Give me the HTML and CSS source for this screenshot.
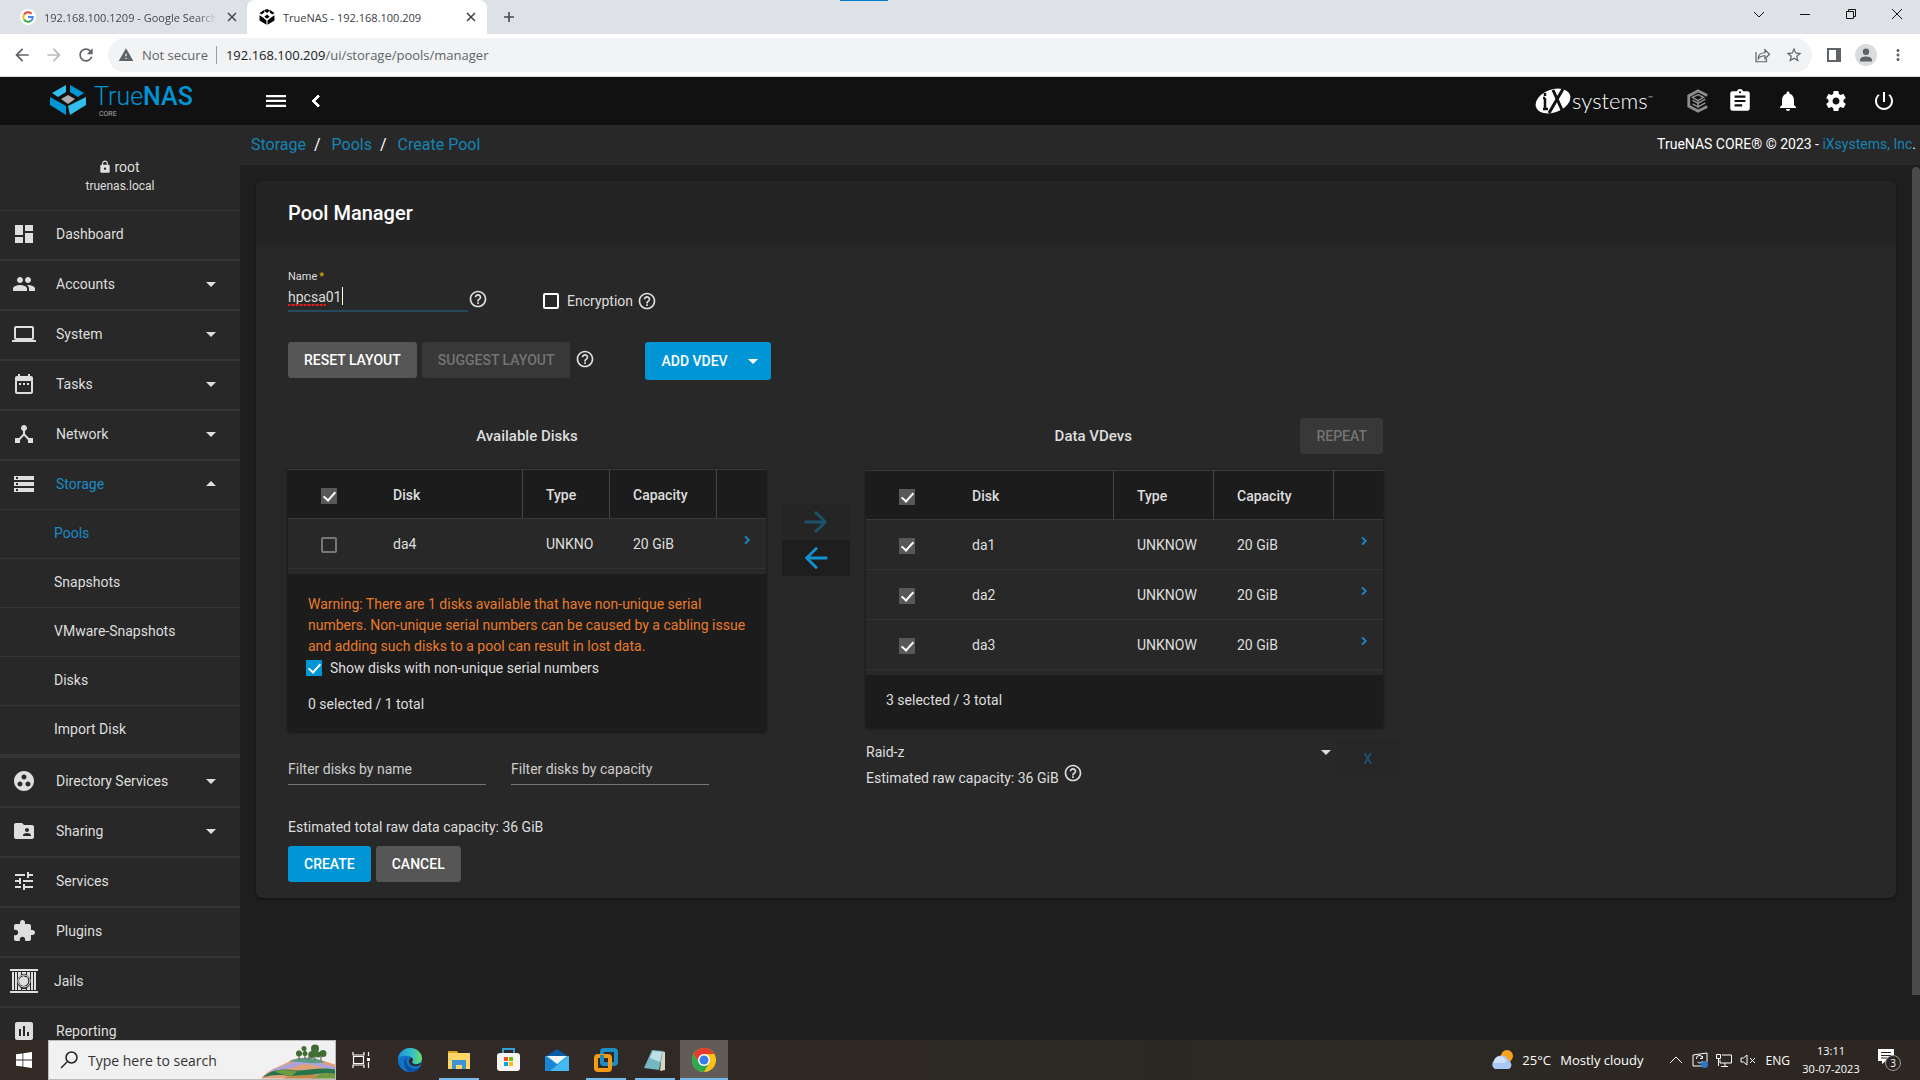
FILE: index.html
```html
<!DOCTYPE html>
<html lang="en">
<head>
<meta charset="utf-8">
<title>TrueNAS - 192.168.100.209</title>
<link rel="stylesheet" href="styles.css">
</head>
<body>
<svg class="sprite" aria-hidden="true">
  <symbol id="i-dashboard" viewBox="0 0 24 24"><path d="M3 13h8V3H3v10zm0 8h8v-6H3v6zm10 0h8V11h-8v10zm0-18v6h8V3h-8z"/></symbol>
  <symbol id="i-people" viewBox="0 0 24 24"><path d="M16 11c1.66 0 2.99-1.34 2.99-3S17.66 5 16 5c-1.66 0-3 1.34-3 3s1.34 3 3 3zm-8 0c1.66 0 2.99-1.34 2.99-3S9.66 5 8 5C6.34 5 5 6.34 5 8s1.34 3 3 3zm0 2c-2.33 0-7 1.17-7 3.5V19h14v-2.5c0-2.33-4.67-3.5-7-3.5zm8 0c-.29 0-.62.02-.97.05 1.16.84 1.97 1.97 1.97 3.45V19h6v-2.5c0-2.33-4.67-3.5-7-3.5z"/></symbol>
  <symbol id="i-laptop" viewBox="0 0 24 24"><path d="M20 18c1.1 0 1.99-.9 1.99-2L22 6c0-1.1-.9-2-2-2H4c-1.1 0-2 .9-2 2v10c0 1.1.9 2 2 2H0v2h24v-2h-4zM4 6h16v10H4V6z"/></symbol>
  <symbol id="i-date" viewBox="0 0 24 24"><path d="M9 11H7v2h2v-2zm4 0h-2v2h2v-2zm4 0h-2v2h2v-2zm2-7h-1V2h-2v2H8V2H6v2H5c-1.11 0-1.99.9-1.99 2L3 20c0 1.1.89 2 2 2h14c1.1 0 2-.9 2-2V6c0-1.1-.9-2-2-2zm0 16H5V9h14v11z"/></symbol>
  <symbol id="i-hub" viewBox="0 0 24 24"><path d="M17 16l-4-4V8.82C14.16 8.4 15 7.3 15 6c0-1.66-1.34-3-3-3S9 4.34 9 6c0 1.3.84 2.4 2 2.82V12l-4 4H3v5h5v-3.05l4-4.2 4 4.2V21h5v-5h-4z"/></symbol>
  <symbol id="i-storage" viewBox="0 0 24 24"><path d="M2 20h20v-4H2v4zm2-3h2v2H4v-2zM2 4v4h20V4H2zm4 3H4V5h2v2zm-4 7h20v-4H2v4zm2-3h2v2H4v-2z"/></symbol>
  <symbol id="i-group" viewBox="0 0 24 24"><path d="M12 2C6.48 2 2 6.48 2 12s4.48 10 10 10 10-4.48 10-10S17.52 2 12 2zM8 17.5c-1.38 0-2.5-1.12-2.5-2.5s1.12-2.5 2.5-2.5 2.5 1.12 2.5 2.5-1.12 2.5-2.5 2.5zM9.5 8c0-1.38 1.12-2.5 2.5-2.5s2.5 1.12 2.5 2.5-1.12 2.5-2.5 2.5S9.5 9.38 9.5 8zm6.5 9.5c-1.38 0-2.5-1.12-2.5-2.5s1.12-2.5 2.5-2.5 2.5 1.12 2.5 2.5-1.12 2.5-2.5 2.5z"/></symbol>
  <symbol id="i-share-folder" viewBox="0 0 24 24"><path d="M20 6h-8l-2-2H4c-1.1 0-1.99.9-1.99 2L2 18c0 1.1.9 2 2 2h16c1.1 0 2-.9 2-2V8c0-1.1-.9-2-2-2zm-5 3c1.1 0 2 .9 2 2s-.9 2-2 2-2-.9-2-2 .9-2 2-2zm4 8h-8v-1c0-1.33 2.67-2 4-2s4 .67 4 2v1z"/></symbol>
  <symbol id="i-tune" viewBox="0 0 24 24"><path d="M3 17v2h6v-2H3zM3 5v2h10V5H3zm10 16v-2h8v-2h-8v-2h-2v6h2zM7 9v2H3v2h4v2h2V9H7zm14 4v-2H11v2h10zm-6-4h2V7h4V5h-4V3h-2v6z"/></symbol>
  <symbol id="i-extension" viewBox="0 0 24 24"><path d="M20.5 11H19V7c0-1.1-.9-2-2-2h-4V3.5C13 2.12 11.88 1 10.5 1S8 2.12 8 3.5V5H4c-1.1 0-1.99.9-1.99 2v3.8H3.5c1.49 0 2.7 1.21 2.7 2.7s-1.21 2.7-2.7 2.7H2V20c0 1.1.9 2 2 2h3.8v-1.5c0-1.49 1.21-2.7 2.7-2.7 1.49 0 2.7 1.21 2.7 2.7V22H17c1.1 0 2-.9 2-2v-4h1.5c1.38 0 2.5-1.12 2.5-2.5S21.88 11 20.5 11z"/></symbol>
  <symbol id="i-jail" viewBox="0 0 28 24"><path d="M0 0h28v2H0zM0 22h28v2H0zM2 3h2v18H2zM5 3h2v18H5zM21 3h2v18h-2zM24 3h2v18h-2zM8 3h3v3l-3 3zM17 3h3v6l-3-3zM8 16l3 3v2H8zM20 16v5h-3v-2zM12 3h4v2h-4zM12 20h4v1h-4z"/><circle cx="14" cy="12" r="6" fill="none" stroke="currentColor" stroke-width="1"/><path d="M14 7c1 2 2 0 4 2-1 1 1 2 0 5-1 2-3 3-5 3-3-1-4-3-4-5 0-3 2-4 5-5z"/></symbol>
  <symbol id="i-chart" viewBox="0 0 24 24"><path d="M19 3H5c-1.1 0-2 .9-2 2v14c0 1.1.9 2 2 2h14c1.1 0 2-.9 2-2V5c0-1.1-.9-2-2-2zM9 17H7v-7h2v7zm4 0h-2V7h2v10zm4 0h-2v-4h2v4z"/></symbol>
  <symbol id="i-help" viewBox="0 0 24 24"><path d="M11 18h2v-2h-2v2zm1-16C6.48 2 2 6.48 2 12s4.48 10 10 10 10-4.48 10-10S17.52 2 12 2zm0 18c-4.41 0-8-3.59-8-8s3.59-8 8-8 8 3.59 8 8-3.59 8-8 8zm0-14c-2.21 0-4 1.79-4 4h2c0-1.1.9-2 2-2s2 .9 2 2c0 2-3 1.75-3 5h2c0-2.25 3-2.5 3-5 0-2.21-1.79-4-4-4z"/></symbol>
  <symbol id="i-down" viewBox="0 0 24 24"><path d="M7 10l5 5 5-5z"/></symbol>
  <symbol id="i-up" viewBox="0 0 24 24"><path d="M7 14l5-5 5 5z"/></symbol>
  <symbol id="i-menu" viewBox="0 0 24 24"><path d="M2 18h20v-2.3H2V18zm0-4.900h20v-2.300H2v2.300zM2 6v2.300h20V6H2z"/></symbol>
  <symbol id="i-left" viewBox="0 0 24 24"><path d="M15.410 7.410L14 6l-6 6 6 6 1.410-1.410L10.830 12z" stroke="currentColor"/></symbol>
  <symbol id="i-right" viewBox="0 0 24 24"><path d="M10 6L8.590 7.410 13.170 12l-4.580 4.590L10 18l6-6z" stroke="currentColor"/></symbol>
  <symbol id="i-assignment" viewBox="0 0 24 24"><path d="M19 3h-4.180C14.400 1.840 13.300 1 12 1c-1.300 0-2.400.840-2.820 2H5c-1.100 0-2 .900-2 2v14c0 1.100.900 2 2 2h14c1.100 0 2-.900 2-2V5c0-1.100-.900-2-2-2zm-7 0c.550 0 1 .450 1 1s-.450 1-1 1-1-.450-1-1 .450-1 1-1zm2 14H7v-2h7v2zm3-4H7v-2h10v2zm0-4H7V7h10v2z"/></symbol>
  <symbol id="i-bell" viewBox="0 0 24 24"><path d="M12 22c1.100 0 2-.900 2-2h-4c0 1.100.890 2 2 2zm6-6v-5c0-3.070-1.640-5.640-4.500-6.320V4c0-.830-.670-1.500-1.500-1.500s-1.500.670-1.500 1.500v.680C7.630 5.360 6 7.920 6 11v5l-2 2v1h16v-1l-2-2z"/></symbol>
  <symbol id="i-gear" viewBox="0 0 24 24"><path d="M19.430 12.980c.040-.320.070-.640.070-.980s-.030-.660-.070-.980l2.110-1.650c.190-.150.240-.420.120-.640l-2-3.460c-.120-.220-.390-.300-.610-.220l-2.490 1c-.520-.400-1.080-.730-1.690-.980l-.380-2.650C14.460 2.180 14.250 2 14 2h-4c-.250 0-.460.180-.490.420l-.380 2.650c-.610.250-1.170.590-1.690.980l-2.490-1c-.230-.090-.490 0-.610.220l-2 3.460c-.130.220-.070.490.120.640l2.110 1.650c-.040.320-.070.650-.070.980s.030.660.070.980l-2.110 1.650c-.190.150-.240.420-.120.640l2 3.460c.120.220.390.300.610.220l2.490-1c.520.400 1.080.730 1.690.980l.380 2.650c.030.240.240.420.490.420h4c.250 0 .460-.180.490-.420l.380-2.650c.610-.250 1.170-.590 1.690-.980l2.490 1c.230.090.490 0 .610-.220l2-3.460c.120-.220.070-.490-.120-.640l-2.110-1.650zM12 15.500c-1.930 0-3.500-1.570-3.500-3.500s1.570-3.500 3.500-3.500 3.500 1.570 3.500 3.500-1.570 3.500-3.500 3.500z"/></symbol>
  <symbol id="i-power" viewBox="0 0 24 24"><path d="M13 3h-2v10h2V3zm4.830 2.170l-1.420 1.420C17.990 7.860 19 9.810 19 12c0 3.870-3.130 7-7 7s-7-3.130-7-7c0-2.190 1.010-4.140 2.580-5.420L6.170 5.170C4.230 6.820 3 9.260 3 12c0 4.970 4.030 9 9 9s9-4.030 9-9c0-2.740-1.230-5.180-3.170-6.830z"/></symbol>
  <symbol id="i-lock" viewBox="0 0 24 24"><path d="M18 8h-1V6c0-2.760-2.240-5-5-5S7 3.240 7 6v2H6c-1.100 0-2 .900-2 2v10c0 1.100.900 2 2 2h12c1.100 0 2-.900 2-2V10c0-1.100-.900-2-2-2zm-6 9c-1.100 0-2-.900-2-2s.900-2 2-2 2 .900 2 2-.900 2-2 2zm3.100-9H8.900V6c0-1.710 1.390-3.100 3.100-3.100 1.710 0 3.100 1.390 3.100 3.100v2z"/></symbol>
  <symbol id="i-back" viewBox="0 0 24 24"><path d="M20 11H7.830l5.590-5.590L12 4l-8 8 8 8 1.410-1.410L7.830 13H20v-2z"/></symbol>
  <symbol id="i-forward" viewBox="0 0 24 24"><path d="M12 4l-1.410 1.410L16.170 11H4v2h12.170l-5.580 5.590L12 20l8-8z"/></symbol>
  <symbol id="i-reload" viewBox="0 0 24 24"><path d="M17.650 6.350C16.200 4.900 14.210 4 12 4c-4.420 0-7.990 3.580-7.990 8s3.570 8 7.990 8c3.730 0 6.840-2.550 7.730-6h-2.080c-.820 2.330-3.040 4-5.650 4-3.310 0-6-2.690-6-6s2.690-6 6-6c1.660 0 3.140.690 4.220 1.780L13 11h7V4l-2.350 2.350z"/></symbol>
  <symbol id="i-warning" viewBox="0 0 24 24"><path d="M1 21h22L12 2 1 21zm12-3h-2v-2h2v2zm0-4h-2v-4h2v4z"/></symbol>
  <symbol id="i-star" viewBox="0 0 24 24"><path d="M22 9.240l-7.190-.620L12 2 9.190 8.630 2 9.240l5.460 4.730L5.820 21 12 17.270 18.180 21l-1.630-7.030L22 9.240zM12 15.400l-3.760 2.270 1-4.280-3.320-2.880 4.380-.380L12 6.100l1.710 4.040 4.380.380-3.320 2.880 1 4.280L12 15.400z"/></symbol>
  <symbol id="i-share" viewBox="0 0 24 24"><path d="M4 8v13h14v-4M7 17c0-5 3-8 9-8V5l6 6-6 6v-4c-4 0-7 1-9 4z" fill="none" stroke="currentColor" stroke-width="1.600"/></symbol>
  <symbol id="i-panel" viewBox="0 0 16 16"><path fill-rule="evenodd" d="M1 1h14v14H1zM3 3v10h7V3z"/></symbol>
  <symbol id="i-person" viewBox="0 0 24 24"><circle cx="12" cy="12" r="12" fill="#dadce0"/><path d="M12 12a3.500 3.500 0 1 0 0-7 3.500 3.500 0 0 0 0 7zm0 1.500c-3 0-6.500 1.300-6.500 3.700V19h13v-1.800c0-2.400-3.500-3.700-6.500-3.700z"/></symbol>
  <symbol id="i-more" viewBox="0 0 24 24"><path d="M12 8c1.100 0 2-.900 2-2s-.900-2-2-2-2 .900-2 2 .900 2 2 2zm0 2c-1.100 0-2 .900-2 2s.900 2 2 2 2-.900 2-2-.900-2-2-2zm0 6c-1.100 0-2 .900-2 2s.900 2 2 2 2-.900 2-2-.900-2-2-2z"/></symbol>
  <symbol id="i-close" viewBox="0 0 12 12"><path d="M2 2l8 8M10 2l-8 8" fill="none" stroke="currentColor" stroke-width="1.500"/></symbol>
  <symbol id="i-plus" viewBox="0 0 12 12"><path d="M6 1v10M1 6h10" fill="none" stroke="currentColor" stroke-width="1.600"/></symbol>
  <symbol id="i-nas" viewBox="0 0 30 30"><path d="M1 7l9-6v5l-5 4zM29 7l-9-6v5l5 4zM13 0h4l3 3-5 4-5-4zM1 11l7 5 6 5v8L1 21zM29 11l-7 5-6 5v8l13-8zM15 10l5 4-5 4-5-4z" transform="translate(0 .5)"/></symbol>
</svg>

<header class="browser">
  <div class="tabstrip">
    <div class="tab">
      <svg class="fav" viewBox="0 0 16 16"><circle cx="8" cy="8" r="8" fill="#fff"/><g fill="none" stroke-width="2"><path d="M11.600 4.800A4.800 4.800 0 0 0 4 5.600" stroke="#ea4335"/><path d="M4 5.500a5 5 0 0 0 0 5" stroke="#fbbc05"/><path d="M4 10.400a4.800 4.800 0 0 0 7 1.300" stroke="#34a853"/><path d="M8 8h4.800c0 1.500-.600 2.800-1.800 3.700" stroke="#4285f4"/></g></svg>
      <span class="tab-title fade">192.168.100.1209 - Google Search</span>
      <button class="plain tab-close" aria-label="Close tab"><svg class="s12"><use href="#i-close"/></svg></button>
    </div>
    <div class="tab active">
      <svg class="fav dark"><use href="#i-nas"/></svg>
      <span class="tab-title">TrueNAS - 192.168.100.209</span>
      <button class="plain tab-close" aria-label="Close tab"><svg class="s12"><use href="#i-close"/></svg></button>
    </div>
    <button class="plain new-tab" aria-label="New tab"><svg class="s12"><use href="#i-plus"/></svg></button>
    <span class="loading-mark"></span>
    <div class="window-buttons">
      <button class="plain" aria-label="Search tabs"><svg viewBox="0 0 10 10"><path d="M0 3l5 5 5-5"/></svg></button>
      <button class="plain" aria-label="Minimise"><svg viewBox="0 0 10 10"><path d="M0 5.500h10"/></svg></button>
      <button class="plain" aria-label="Restore"><svg viewBox="0 0 10 10"><path d="M.5 2.500h7v7h-7zM2.500 2.500v-2h7v7h-2"/></svg></button>
      <button class="plain" aria-label="Close"><svg viewBox="0 0 10 10"><path d="M0 0l10 10M10 0L0 10"/></svg></button>
    </div>
  </div>
  <div class="toolbar">
    <button class="plain nav-btn" aria-label="Back"><svg class="s20"><use href="#i-back"/></svg></button>
    <button class="plain nav-btn faint" aria-label="Forward"><svg class="s20"><use href="#i-forward"/></svg></button>
    <button class="plain nav-btn" aria-label="Reload"><svg class="s20"><use href="#i-reload"/></svg></button>
    <div class="omnibox">
      <svg class="s16"><use href="#i-warning"/></svg>
      <span class="secure">Not secure</span>
      <span class="url"><b>192.168.100.209</b>/ui/storage/pools/manager</span>
      <button class="plain nav-btn" aria-label="Share"><svg class="s18"><use href="#i-share"/></svg></button>
      <button class="plain nav-btn" aria-label="Bookmark"><svg class="s18"><use href="#i-star"/></svg></button>
    </div>
    <button class="plain nav-btn" aria-label="Side panel"><svg class="s16"><use href="#i-panel"/></svg></button>
    <button class="plain nav-btn" aria-label="Profile"><svg class="s22"><use href="#i-person"/></svg></button>
    <button class="plain nav-btn" aria-label="Menu"><svg class="s18"><use href="#i-more"/></svg></button>
  </div>
</header>

<div class="app">
  <header class="topbar">
    <a class="brand" href="#">
      <svg class="brand-mark" viewBox="0 0 36 30"><path fill="#31beec" d="M2 8L16 0v7L8 12zM18 21l18-9v8L20 30z"/><path fill="#0095d5" d="M34 8L20 0v7l8 5zM0 12l16 9v9L0 20z"/><path fill="#aeadae" d="M18 10l7 4-7 5-7-5z"/></svg>
      <span class="brand-text"><span class="brand-name">True<b>NAS</b></span><span class="brand-sub">CORE</span></span>
    </a>
    <button class="plain top-btn menu" aria-label="Toggle menu"><svg class="s24"><use href="#i-menu"/></svg></button>
    <button class="plain top-btn" aria-label="Collapse menu"><svg class="s24"><use href="#i-left"/></svg></button>
    <a class="ix" href="#">
      <svg class="ix-mark" viewBox="0 0 36 28"><ellipse cx="18" cy="14" rx="18" ry="11.500" transform="rotate(-20 18 14)" fill="#fff"/><path d="M18 3l9 20M28 2L14 26" stroke="#111" stroke-width="3"/><path d="M10 11v11M10 6v3M8 11h2M8 22h5" stroke="#111" stroke-width="2.500"/></svg>
      <span>systems</span><sup>™</sup>
    </a>
    <div class="top-icons">
      <button class="plain top-btn command" aria-label="TrueCommand"><svg class="s24" viewBox="0 0 24 26"><path d="M22 7L12 2 2 7.500v11L12 24l10-5" fill="none" stroke="currentColor" stroke-width="3"/><path d="M12 6l6 3-6 3.500L6 9zM6 12l6 3.500 8-4.500M6 16l6 3.500 8-4.500M12 12v9" fill="none" stroke="currentColor" stroke-width="1.600"/></svg></button>
      <button class="plain top-btn" aria-label="Tasks"><svg class="s26"><use href="#i-assignment"/></svg></button>
      <button class="plain top-btn" aria-label="Alerts"><svg class="s24"><use href="#i-bell"/></svg></button>
      <button class="plain top-btn" aria-label="Settings"><svg class="s24"><use href="#i-gear"/></svg></button>
      <button class="plain top-btn" aria-label="Power"><svg class="s24"><use href="#i-power"/></svg></button>
    </div>
  </header>

  <aside class="sidebar">
    <div class="user"><span class="user-name"><svg class="s14"><use href="#i-lock"/></svg>root</span><span class="host">truenas.local</span></div>
    <nav>
      <a class="item" href="#"><svg class="ico"><use href="#i-dashboard"/></svg>Dashboard</a>
      <a class="item" href="#"><svg class="ico"><use href="#i-people"/></svg>Accounts<svg class="caret"><use href="#i-down"/></svg></a>
      <a class="item" href="#"><svg class="ico"><use href="#i-laptop"/></svg>System<svg class="caret"><use href="#i-down"/></svg></a>
      <a class="item" href="#"><svg class="ico"><use href="#i-date"/></svg>Tasks<svg class="caret"><use href="#i-down"/></svg></a>
      <a class="item" href="#"><svg class="ico"><use href="#i-hub"/></svg>Network<svg class="caret"><use href="#i-down"/></svg></a>
      <a class="item open" href="#"><svg class="ico"><use href="#i-storage"/></svg><span class="accent">Storage</span><svg class="caret"><use href="#i-up"/></svg></a>
      <div class="submenu">
        <a class="sub accent" href="#">Pools</a>
        <a class="sub" href="#">Snapshots</a>
        <a class="sub" href="#">VMware-Snapshots</a>
        <a class="sub" href="#">Disks</a>
        <a class="sub" href="#">Import Disk</a>
      </div>
      <a class="item" href="#"><svg class="ico"><use href="#i-group"/></svg>Directory Services<svg class="caret"><use href="#i-down"/></svg></a>
      <a class="item" href="#"><svg class="ico"><use href="#i-share-folder"/></svg>Sharing<svg class="caret"><use href="#i-down"/></svg></a>
      <a class="item" href="#"><svg class="ico"><use href="#i-tune"/></svg>Services</a>
      <a class="item" href="#"><svg class="ico"><use href="#i-extension"/></svg>Plugins</a>
      <a class="item jails" href="#"><svg class="ico"><use href="#i-jail"/></svg>Jails</a>
      <a class="item" href="#"><svg class="ico"><use href="#i-chart"/></svg>Reporting</a>
    </nav>
  </aside>

  <main class="content">
    <div class="crumbs">
      <nav><a href="#">Storage</a><i>/</i><a href="#">Pools</a><i>/</i><a href="#">Create Pool</a></nav>
      <p>TrueNAS CORE® © 2023 - <a href="#">iXsystems, Inc</a>.</p>
    </div>
    <div class="scroller">
      <form class="card">
        <h1>Pool Manager</h1>
        <div class="card-body">
          <div class="row fields">
            <div class="name-field">
              <label for="pool-name">Name<em>*</em></label>
              <div class="name-input"><span class="misspelt"></span><input id="pool-name" type="text" value="hpcsa01" spellcheck="false"><span class="cursor"></span></div>
            </div>
            <svg class="help"><use href="#i-help"/></svg>
            <div class="encrypt"><input type="checkbox" class="box light" id="enc"><label for="enc">Encryption</label><svg class="help"><use href="#i-help"/></svg></div>
          </div>
          <div class="row actions">
            <button type="button" class="btn">RESET LAYOUT</button>
            <button type="button" class="btn" disabled>SUGGEST LAYOUT</button>
            <svg class="help"><use href="#i-help"/></svg>
            <button type="button" class="btn primary vdev">ADD VDEV<svg class="s24"><use href="#i-down"/></svg></button>
          </div>

          <div class="columns">
            <section>
              <h2>Available Disks</h2>
              <div class="panel">
                <table class="available">
                  <colgroup><col class="c-check"><col class="c-disk"><col class="c-type"><col class="c-cap"><col></colgroup>
                  <thead><tr><th><input type="checkbox" class="box" checked aria-label="Select all"></th><th>Disk</th><th>Type</th><th>Capacity</th><th></th></tr></thead>
                  <tbody><tr><td><input type="checkbox" class="box" aria-label="da4"></td><td>da4</td><td>UNKNO</td><td>20 GiB</td><td><svg class="go"><use href="#i-right"/></svg></td></tr></tbody>
                </table>
                <div class="panel-foot warned">
                  <p class="warn">Warning: There are 1 disks available that have non-unique serial numbers. Non-unique serial numbers can be caused by a cabling issue and adding such disks to a pool can result in lost data.</p>
                  <div class="show"><input type="checkbox" class="box blue" id="nonuniq" checked><label for="nonuniq">Show disks with non-unique serial numbers</label></div>
                  <p class="count">0 selected / 1 total</p>
                </div>
              </div>
              <div class="filters">
                <input type="text" aria-label="Filter disks by name" placeholder="Filter disks by name">
                <input type="text" aria-label="Filter disks by capacity" placeholder="Filter disks by capacity">
              </div>
            </section>
            <div class="movers">
              <button type="button" class="move" disabled aria-label="Add disks"><svg><use href="#i-forward"/></svg></button>
              <button type="button" class="move" aria-label="Remove disks"><svg><use href="#i-back"/></svg></button>
            </div>
            <section>
              <div class="vdev-head"><h2>Data VDevs</h2><button type="button" class="btn" disabled>REPEAT</button></div>
              <div class="panel">
                <table class="data">
                  <colgroup><col class="c-check"><col class="c-disk"><col class="c-type"><col class="c-cap"><col></colgroup>
                  <thead><tr><th><input type="checkbox" class="box" checked aria-label="Select all"></th><th>Disk</th><th>Type</th><th>Capacity</th><th></th></tr></thead>
                  <tbody>
                    <tr><td><input type="checkbox" class="box" checked aria-label="da1"></td><td>da1</td><td>UNKNOW</td><td>20 GiB</td><td><svg class="go"><use href="#i-right"/></svg></td></tr>
                    <tr><td><input type="checkbox" class="box" checked aria-label="da2"></td><td>da2</td><td>UNKNOW</td><td>20 GiB</td><td><svg class="go"><use href="#i-right"/></svg></td></tr>
                    <tr><td><input type="checkbox" class="box" checked aria-label="da3"></td><td>da3</td><td>UNKNOW</td><td>20 GiB</td><td><svg class="go"><use href="#i-right"/></svg></td></tr>
                  </tbody>
                </table>
                <div class="panel-foot"><p>3 selected / 3 total</p></div>
              </div>
              <div class="raid">
                <div class="raid-info">
                  <div class="select"><select aria-label="VDev type"><option>Raid-z</option></select><svg class="s24"><use href="#i-down"/></svg></div>
                  <p>Estimated raw capacity: 36 GiB <svg class="help"><use href="#i-help"/></svg></p>
                </div>
                <button type="button" class="remove" disabled>X</button>
              </div>
            </section>
          </div>

          <p class="total">Estimated total raw data capacity: 36 GiB</p>
          <div class="row">
            <button type="submit" class="btn primary">CREATE</button>
            <button type="button" class="btn">CANCEL</button>
          </div>
        </div>
      </form>
      <div class="scrollbar"></div>
    </div>
  </main>
</div>

<footer class="taskbar">
  <button class="plain start" aria-label="Start"><svg viewBox="0 0 16 16"><path fill="#fff" d="M0 2.300l6.500-.900v6.200H0zM7.300 1.300L16 0v7.600H7.300zM0 8.400h6.500v6.200L0 13.700zM7.300 8.400H16V16l-8.700-1.200z"/></svg></button>
  <div class="search">
    <svg class="s18" viewBox="0 0 18 18"><path d="M1 17l6-6" stroke="#222" stroke-width="1.500"/><circle cx="11.500" cy="6.500" r="5.500" fill="none" stroke="#222" stroke-width="1.500"/></svg>
    <input type="text" aria-label="Search" placeholder="Type here to search">
    <svg class="hills" viewBox="0 0 74 36">
      <path fill="#e0a07c" d="M0 36C8 26 20 24 30 18c16-6 32 0 44 4v14z"/>
      <path fill="#a9a4e0" d="M6 32c8-8 18-8 28-13 12-4 28 2 40 6v3C60 26 48 18 34 24 24 28 14 26 6 32z"/>
      <path fill="#5f9a86" d="M28 19c10-5 26-5 36 1-12 2-26-1-36-1z"/>
      <path fill="#24744c" d="M2 35c8-8 20-9 32-7 14 0 26-4 40-1v5c-14-4-28 4-44 2-10-2-18-2-28 1z"/>
      <path fill="#6f9c43" d="M14 29c8-3 14-1 22 0l-6 5c-6-2-10-2-16-5zM50 36c6-5 14-6 24-5v5z"/>
      <path fill="#c08a4a" d="M22 36c8-4 18-3 30-4l6 4z"/>
      <path d="M38 17V8M44 16V5M54 17V7M60 18v-8M48 17v-6" stroke="#5b4630"/>
      <g fill="#3f6d33"><circle cx="38" cy="11" r="3"/><circle cx="43" cy="6" r="2.500"/><circle cx="44" cy="11" r="2.500"/><circle cx="54" cy="6" r="4"/><circle cx="51" cy="12" r="3.500"/><circle cx="57" cy="12" r="3"/><circle cx="62" cy="11" r="3.500"/></g>
    </svg>
  </div>
  <div class="apps">
    <button class="plain appicon" aria-label="Task view"><svg viewBox="0 0 24 24"><path d="M4 4v3h11V4M4 20v-3h11v3M4.500 8.500h10v7h-10zM19.500 4v4M19.500 14v6" fill="none" stroke="#fff" stroke-width="1.200"/><path fill="#fff" d="M18 10h3v3h-3z"/></svg></button>
    <button class="plain appicon" aria-label="Edge"><svg viewBox="0 0 24 24"><defs><linearGradient id="ga" x1="0" x2="1"><stop stop-color="#1b8fdc"/><stop offset=".6" stop-color="#35c1c8"/><stop offset="1" stop-color="#6cdc5a"/></linearGradient></defs><circle cx="12" cy="12" r="12" fill="#1174c9"/><path fill="url(#ga)" d="M0 11C1 4 6 0 12 0c7 0 12 5 12 10 0 4-3 6-6 6-2 0-4-1-4-2 2-2 1-6-4-6-5-1-9 1-10 3z"/><path fill="#0c4f9c" d="M9 9c-2 4 0 11 7 12 3 0 5-1 7-3-3 6-9 7-13 5-5-3-5-11-1-14z"/><path fill="#322925" d="M14 10c2 2 0 4 0 4 0 2 3 3 6 2l3-1c0 1-1 2-1 2-6 3-12 0-11-5 1-2 2-2 3-2z"/></svg></button>
    <button class="plain appicon running" aria-label="File Explorer"><svg viewBox="0 0 24 24"><path fill="#e0a020" d="M1 3h9l2 3H1z"/><path fill="#ffd768" d="M1 5h22v16H1z"/><path fill="#3b94d8" d="M5 12h14v9h-4v-4H9v4H5z"/></svg></button>
    <button class="plain appicon" aria-label="Store"><svg viewBox="0 0 24 24"><path d="M7 6V1h11v5" fill="none" stroke="#35a0d8" stroke-width="2"/><rect x="1" y="5" width="23" height="18" rx="3" fill="#f5f5f5"/><path fill="#f25022" d="M8 9h4v4H8z"/><path fill="#7fba00" d="M13 9h4v4h-4z"/><path fill="#00a4ef" d="M8 14h4v4H8z"/><path fill="#ffb900" d="M13 14h4v4h-4z"/></svg></button>
    <button class="plain appicon" aria-label="Mail"><svg viewBox="0 0 24 24"><path fill="#0a5aaa" d="M0 9L12 1l12 8z"/><path fill="#29a5ea" d="M0 8h24v15H0z"/><path fill="#1c86d4" d="M0 8l13 8-7 7H0z"/><path fill="#45b9f2" d="M24 8v15H5z"/><path fill="#f2f6fa" d="M2 8h20L12 16z"/></svg></button>
    <button class="plain appicon running" aria-label="VMware"><svg viewBox="0 0 24 24"><rect x="8" y="2" width="14" height="14" rx="2" fill="none" stroke="#1c8ec4" stroke-width="4"/><rect x="2" y="8" width="14" height="14" rx="2" fill="none" stroke="#f59a13" stroke-width="4"/><path d="M8 12V7" stroke="#1c8ec4" stroke-width="4"/></svg></button>
    <button class="plain appicon running" aria-label="Notepad"><svg viewBox="0 0 24 24"><path fill="#d9d4c6" d="M19 3l3 1v18l-5 1z"/><path fill="#76b7c4" d="M9 2l11 1-4 19-15-2z"/><path fill="#bfe0e6" d="M10 3l9 1-2 10-10-4z"/></svg></button>
    <button class="plain appicon current" aria-label="Chrome"><svg viewBox="0 0 24 24"><circle cx="12" cy="12" r="12" fill="#fbc116"/><path fill="#e33b2e" d="M1.600 6a12 12 0 0 1 20.800 0H12l-5 9z"/><path fill="#2da94f" d="M1.600 6A12 12 0 0 0 12 24l5-9-5 2-5-2z"/><circle cx="12" cy="12" r="6" fill="#fff"/><circle cx="12" cy="12" r="4.500" fill="#3b7de8"/></svg></button>
  </div>
  <div class="tray">
    <svg class="weather" viewBox="0 0 24 20"><circle cx="17" cy="6" r="6" fill="#f7a21b"/><path fill="#a9c8f5" d="M5 19a5 5 0 0 1 0-9 7 7 0 0 1 13 0 5 5 0 0 1 1 9z"/><path fill="#cfe0fb" d="M4 13a6 6 0 0 1 11-4c2 1 1 4-2 4z"/></svg>
    <span class="temp">25°C</span><span class="sky">Mostly cloudy</span>
    <svg class="tray-i chev" viewBox="0 0 16 16"><path d="M2 11l6-6 6 6"/></svg>
    <svg class="tray-i" viewBox="0 0 16 16"><path d="M10 14H1V3l14-2v9M4.500 7a3 3 0 0 1 6-1M10.500 9a3 3 0 0 1-5 1M10.500 4v2.500H8"/><circle cx="12.500" cy="12.500" r="3.500" fill="#2f78c8" stroke="none"/></svg>
    <svg class="tray-i" viewBox="0 0 16 16"><path d="M6 3h9.500v8H4V8M.5 2.500h4v4h-4zM2.500 6.500V14M9 11v3M5 14.500h7"/></svg>
    <svg class="tray-i" viewBox="0 0 16 16"><path d="M1 6h2.500L7 3v10l-3.500-3H1zM10 6l5 5M15 6l-5 5"/></svg>
    <span class="lang">ENG</span>
    <time class="clock"><span>13:11</span><span>30-07-2023</span></time>
    <button class="plain notes" aria-label="3 notifications"><svg viewBox="0 0 24 24"><path fill="#fff" d="M0 1h16v12H8l-4 3v-3H0z"/><path d="M3 4.500h10M3 7.500h10M3 10h6" stroke="#2b2622"/></svg><span>3</span></button>
  </div>
</footer>
</body>
</html>
```
FILE: styles.css
```css
* { box-sizing: border-box; }
body { margin: 0; height: 100vh; display: flex; flex-direction: column; overflow: hidden; background: #1e1e1e; font-family: Roboto, sans-serif; font-size: 14px; color: #dedede; }
p, h1, h2 { margin: 0; }
a { color: inherit; text-decoration: none; }
svg { fill: currentColor; flex: none; }
.sprite { position: absolute; width: 0; height: 0; }
.plain { border: 0; padding: 0; margin: 0; background: none; color: inherit; display: flex; align-items: center; justify-content: center; font: inherit; }
.s12 { width: 12px; height: 12px; }
.s14 { width: 14px; height: 14px; }
.s16 { width: 16px; height: 16px; }
.s18 { width: 18px; height: 18px; }
.s20 { width: 20px; height: 20px; }
.s22 { width: 22px; height: 22px; }
.s24 { width: 24px; height: 24px; }
.s26 { width: 26px; height: 26px; }

/* browser chrome */
.browser { flex: none; color: #45484c; font-family: "Open Sans", sans-serif; }
.tabstrip { height: 34px; background: #dee1e6; display: flex; position: relative; }
.tab { display: flex; align-items: center; width: 247px; padding: 0 8px 0 20px; font-size: 11px; }
.tab.active { width: 240px; padding: 0 9px 0 12px; background: #fff; border-radius: 8px 8px 0 0; color: #3c4043; }
.fav { width: 16px; height: 16px; margin-right: 8px; }
.fav.dark { color: #000; }
.tab-title { flex: 1; white-space: nowrap; overflow: hidden; }
.fade { -webkit-mask-image: linear-gradient(90deg, #000 88%, transparent); mask-image: linear-gradient(90deg, #000 88%, transparent); }
.tab-close { width: 14px; height: 16px; margin-left: 8px; }
.new-tab { width: 44px; }
.loading-mark { position: absolute; left: 840px; top: 0; width: 48px; height: 1px; background: #0078d7; }
.window-buttons { margin-left: auto; display: flex; height: 28px; color: #111; }
.window-buttons button { width: 46px; }
.window-buttons svg { width: 10px; height: 10px; fill: none; stroke: currentColor; }
.toolbar { height: 43px; background: #fff; border-bottom: 1px solid #d5d8dc; display: flex; align-items: center; padding: 0 6px; color: #5f6368; }
.nav-btn { width: 32px; height: 32px; }
.nav-btn.faint { color: #b9bcbf; }
.omnibox { flex: 1; display: flex; align-items: center; height: 34px; margin: 0 6px; padding-left: 10px; padding-right: 2px; border-radius: 17px; background: #f1f3f4; font-size: 13px; }
.omnibox .secure { margin-left: 8px; padding-right: 8px; border-right: 1px solid #9aa0a6; }
.omnibox .url { flex: 1; margin-left: 9px; }
.omnibox b { font-weight: 400; color: #202124; }

/* app frame */
.app { flex: 1; min-height: 0; display: grid; grid-template: 48px minmax(0, 1fr) / 240px minmax(0, 1fr); }
.topbar { grid-column: 1 / -1; display: flex; align-items: center; background: #111; color: #fff; }
.brand { width: 240px; padding: 0 0 2px 50px; display: flex; gap: 8px; align-items: center; height: 48px; }
.brand-mark { width: 36px; height: 30px; }
.brand-text { display: flex; flex-direction: column; height: 34px; color: #0095d5; padding-top: 1px; }
.brand-name { font-size: 25px; line-height: 26px; font-weight: 300; }
.brand-name b { font-weight: 500; }
.brand-sub { font-size: 7px; line-height: 8px; padding-left: 5px; color: #aaa; }
.top-btn { width: 48px; height: 48px; }
.top-btn.menu { margin-left: 12px; margin-right: -8px; }
.ix { margin-left: auto; display: flex; align-items: center; height: 28px; font: 300 22px/30px Lato, sans-serif; gap: 1px; }
.ix-mark { width: 36px; height: 28px; }
.ix sup { font-size: 6px; line-height: 8px; align-self: flex-start; margin-top: 7px; }
.top-icons { display: flex; margin: 0 12px 0 21px; }
.top-btn.command { width: 48px; margin-right: -6px; color: #8e8e8e; }

/* sidebar */
.sidebar { background: #282828; overflow: hidden; }
.user { height: 86px; padding-top: 33px; border-bottom: 1px solid #353535; display: flex; flex-direction: column; align-items: center; gap: 2px; }
.user-name { display: flex; align-items: center; gap: 2px; line-height: 18px; padding-right: 2px; }
.host { font-size: 12px; line-height: 16px; }
.item { display: flex; align-items: center; height: 50px; padding: 0 17px 2px 12px; border-bottom: 2px solid #353535; }
.item.open { height: 49px; border-bottom-width: 1px; }
.ico { width: 24px; height: 24px; margin-right: 20px; }
.jails { padding-left: 10px; }
.jails .ico { width: 28px; margin-right: 16px; }
.caret { width: 24px; height: 24px; margin-left: auto; }
.submenu { border-bottom: 3px solid #353535; }
.sub { display: flex; align-items: center; height: 49px; padding: 0 0 2px 54px; border-bottom: 1px solid #353535; }
.accent { color: #1a8bc8; }

/* content */
.content { display: flex; flex-direction: column; min-width: 0; }
.crumbs { flex: none; height: 40px; background: #282828; display: flex; align-items: center; justify-content: space-between; padding: 0 4px 2px 11px; }
.crumbs nav { font-size: 16px; }
.crumbs i { font-style: normal; color: #fff; margin: 0 11px 0 8px; }
.crumbs a { color: #1584b5; }
.crumbs p { color: #fff; }
.scroller { flex: 1; min-height: 0; display: flex; align-items: flex-start; padding: 16px 0 0 16px; }
.card { flex: 1; background: #282828; border-radius: 6px; box-shadow: 0 1px 3px rgba(0, 0, 0, .5); overflow: hidden; margin: 0; }
.card h1 { height: 64px; padding-left: 32px; font-size: 20px; line-height: 64px; font-weight: 500; color: #fff; background: #242424; }
.card-body { padding: 24px 32px 16px; }
.scrollbar { width: 8px; height: 828px; margin-left: 16px; margin-top: -14px; border-radius: 4px 4px 0 0; background: #4b4b4b; }
.row { display: flex; align-items: center; gap: 5px; }
.help { width: 20px; height: 20px; }
.fields { height: 43px; align-items: flex-start; }
.name-field { width: 180px; margin-right: -5px; }
.name-field label { display: block; font-size: 11px; line-height: 16px; }
.name-field em { color: #e6b800; font-style: normal; padding-left: 2px; }
.name-input { display: flex; position: relative; height: 27px; padding: 2px 0 4px; border-bottom: 2px solid #264a5c; }
.name-input input { width: 54px; border: 0; padding: 0; background: none; color: inherit; font: inherit; outline: 0; }
.cursor { width: 1px; height: 18px; background: #fff; }
.misspelt { position: absolute; left: 0; top: 19px; width: 38px; height: 2px; background: repeating-linear-gradient(90deg, #d22 0 2px, #7a2020 2px 4px); }
.fields > .help { margin-top: 20px; }
.encrypt { display: flex; align-items: center; height: 20px; margin: 22px 0 0 50px; gap: 4px; }
.encrypt label { margin-left: 4px; }
.box { appearance: none; position: relative; width: 16px; height: 16px; margin: 0; border: 2px solid #777; border-radius: 2px; display: block; }
.box.light { border-color: #fff; }
.box:checked { background: #585858; border-color: #585858; border-radius: 0; }
.box.blue:checked { background: #0095d5; border-color: #0095d5; }
.box:checked::before { content: ""; position: absolute; left: 3px; top: -1px; width: 5px; height: 10px; border: solid #fff; border-width: 0 2px 2px 0; transform: rotate(42deg); }
.btn { height: 36px; padding: 0 16px; border: 0; border-radius: 3px; background: #555; color: #fff; font: 500 14px/34px Roboto, sans-serif; white-space: nowrap; }
.btn:disabled { background: #383838; color: #747474; }
.btn.primary { background: #0095d5; }
.actions { margin-top: 30px; height: 38px; align-items: flex-start; }
.actions .help { margin-top: 7px; }
.actions .vdev { height: 38px; margin-left: 45px; padding-right: 6px; display: flex; align-items: center; gap: 13px; }
.columns { display: grid; grid-template-columns: minmax(0, 478fr) 68px minmax(0, 517fr) minmax(0, 465fr); gap: 16px; margin-top: 38px; }
h2 { font-size: 15px; line-height: 36px; font-weight: 500; text-align: center; }
.vdev-head { display: grid; grid-template-columns: 1fr auto; }
.vdev-head h2 { padding-left: 20px; }
.panel { margin-top: 15px; background: #1c1c1c; box-shadow: 0 1px 3px rgba(0, 0, 0, .6); }
.vdev-head + .panel { margin-top: 16px; }
table { width: 100%; table-layout: fixed; border-collapse: separate; border-spacing: 0; padding-bottom: 5px; background: #282828; }
.c-check { width: 89px; } .c-disk { width: 145px; } .c-type { width: 87px; } .c-cap { width: 107px; }
.data .c-check { width: 90px; } .data .c-disk { width: 157px; } .data .c-type { width: 100px; } .data .c-cap { width: 120px; }
th, td { height: 50px; padding: 0 0 0 24px; text-align: left; font-weight: 400; overflow: hidden; border-bottom: 1px solid #323232; }
th { font-weight: 500; padding-top: 2px; background: #1c1c1c; border-top: 1px solid #383838; border-bottom-color: #383838; }
th + th + th { border-left: 1px solid #454545; padding-left: 23px; }
th:nth-child(2), td:nth-child(2) { padding-left: 16px; }
th:first-child, td:first-child { padding: 3px 0 0 33px; }
td:last-child { text-align: right; padding: 0 11px 4px 0; }
.go { width: 16px; height: 16px; color: #1a8bc8; display: inline-block; }
.panel-foot { padding: 17px 20px 19px; line-height: 16px; }
.panel-foot.warned { padding-top: 20px; }
.warn { color: #e87b2c; line-height: 21px; }
.show { display: flex; align-items: center; gap: 8px; margin-left: -2px; height: 22px; }
.count { margin-top: 17px; }
.filters { display: flex; gap: 25px; margin-top: 23px; }
.filters input { width: 198px; height: 31px; padding: 0; border: 0; border-bottom: 1px solid #777; background: none; font: inherit; color: inherit; }
.filters input::placeholder { color: #ccc; opacity: 1; }
.movers { padding-top: 86px; }
.move { display: flex; align-items: center; justify-content: center; width: 68px; height: 36px; border: 0; border-radius: 3px; background: #1e1e1e; color: #0f93d2; padding: 0; }
.move svg { width: 34px; height: 34px; }
.move:disabled { background: #252525; color: #1d526c; }
.raid { display: flex; width: calc(100% + 17px); padding-top: 14px; }
.raid-info { flex: 1; }
.select { position: relative; display: flex; align-items: center; }
.select select { flex: 1; appearance: none; border: 0; background: none; color: inherit; font: inherit; padding: 0; height: 22px; }
.select svg { position: absolute; right: -2px; }
.raid p { display: flex; gap: 4px; line-height: 30px; }
.remove { width: 64px; height: 36px; border: 0; background: #262626; color: #1d526c; font: 500 14px Roboto, sans-serif; }
.total { margin-top: 24px; line-height: 20px; padding-bottom: 9px; }

/* taskbar */
.taskbar { flex: none; height: 40px; display: flex; background: linear-gradient(90deg, #352a26, #2c2925 60%, #2d2723); color: #fff; font-family: "Open Sans", sans-serif; }
.start { width: 48px; }
.start svg { width: 16px; height: 16px; }
.search { width: 288px; display: flex; align-items: center; background: #f1f1f1; border: 1px solid #bbb; padding-left: 11px; position: relative; }
.search input { border: 0; background: none; width: 150px; margin-left: 10px; padding: 0; font: 14px "Open Sans", sans-serif; }
.search input::placeholder { color: #333; opacity: 1; }
.hills { position: absolute; right: 0; bottom: 0; width: 74px; height: 37px; }
.apps { display: flex; gap: 1px; padding-left: 1px; }
.appicon { width: 48px; position: relative; }
.appicon svg { width: 24px; height: 24px; }
.running::after, .current::after { content: ""; position: absolute; left: 4px; right: 4px; bottom: 0; height: 2px; background: #76b9ed; }
.current { background: #625c58; }
.current::after { left: 0; right: 0; }
.tray { margin-left: auto; display: flex; align-items: center; padding-right: 18px; }
.weather { width: 24px; height: 20px; margin-right: 8px; }
.temp { width: 38px; }
.sky { margin-right: 24px; }
.temp, .sky { font-size: 13px; white-space: nowrap; }
.tray-i { width: 16px; height: 16px; margin-right: 8px; fill: none; stroke: #fff; }
.lang { font-size: 12px; margin: 0 11px 0 2px; }
.clock { width: 60px; display: flex; flex-direction: column; align-items: center; font-size: 11px; line-height: 18px; }
.notes { position: relative; width: 24px; height: 24px; margin-left: 17px; }
.notes svg { width: 24px; height: 24px; }
.notes span { position: absolute; left: 7px; top: 7px; width: 16px; height: 16px; border: 1px solid #999; border-radius: 50%; background: #2b2622; font-size: 10px; line-height: 14px; }
```
